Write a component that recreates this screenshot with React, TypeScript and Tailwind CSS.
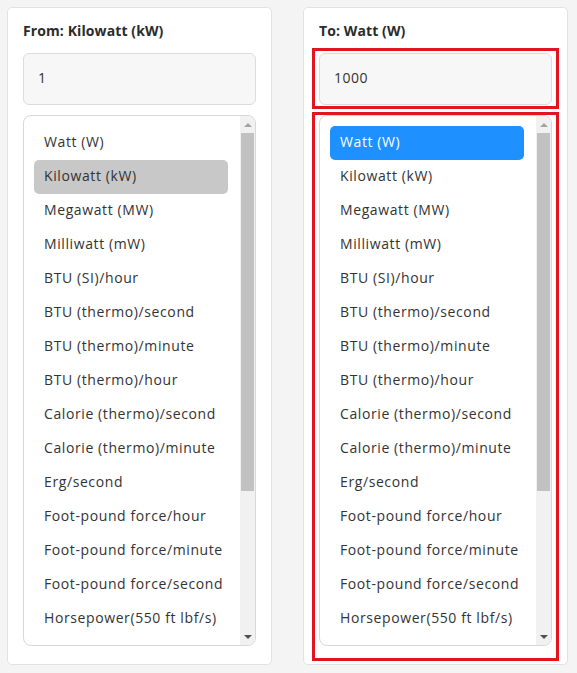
import React from "react";

const units = [
  "Watt (W)",
  "Kilowatt (kW)",
  "Megawatt (MW)",
  "Milliwatt (mW)",
  "BTU (SI)/hour",
  "BTU (thermo)/second",
  "BTU (thermo)/minute",
  "BTU (thermo)/hour",
  "Calorie (thermo)/second",
  "Calorie (thermo)/minute",
  "Erg/second",
  "Foot-pound force/hour",
  "Foot-pound force/minute",
  "Foot-pound force/second",
  "Horsepower(550 ft lbf/s)",
  "Horsepower (metric)",
];

const font = { fontFamily: '"Open Sans", "Noto Sans", sans-serif' };

interface PanelProps {
  label: string;
  value: string;
  selected: number;
  active?: boolean;
  marked?: boolean;
}

const Scrollbar: React.FC = () => (
  <div className="w-[15px] shrink-0 bg-[#f1f1f1] flex flex-col items-center">
    <div className="h-[17px] flex items-center justify-center">
      <div className="w-0 h-0 border-l-[4px] border-r-[4px] border-b-[4px] border-l-transparent border-r-transparent border-b-[#a3a3a3]" />
    </div>
    <div className="w-[13px] h-[358px] bg-[#c1c1c1]" />
    <div className="flex-1" />
    <div className="h-[17px] flex items-center justify-center">
      <div className="w-0 h-0 border-l-[4px] border-r-[4px] border-t-[4px] border-l-transparent border-r-transparent border-t-[#505050]" />
    </div>
  </div>
);

const Panel: React.FC<PanelProps> = ({ label, value, selected, active, marked }) => {
  return (
    <div className="w-[265px] h-[658px] shrink-0 bg-white border border-[#e2e2e2] rounded-[5px] px-[15px] pt-[12px]">
      <div className="h-[22px] leading-[22px] text-[14px] font-bold text-[#2b2b2b] tracking-[0.1px]">{label}</div>
      <div className="relative mt-[11px]">
        <div className="h-[52px] bg-[#f7f7f7] border border-[#dcdcdc] rounded-[6px] flex items-center px-[14px] pb-[3px] text-[14px] text-[#333] tracking-[0.5px]">
          {value}
        </div>
        {marked && (
          <div className="absolute -left-[7px] -right-[7px] -top-[5px] -bottom-[4px] border-[3px] border-[#e3141f] pointer-events-none" />
        )}
      </div>
      <div className="relative mt-[10px]">
        <div className="h-[531px] border border-[#d8d8d8] rounded-[8px] overflow-hidden flex">
          <div className="flex-1 overflow-hidden pt-[10px] pl-[10px] pr-[12px]">
            {units.map((u, i) => (
              <div
                key={u}
                className={
                  "h-[34px] shrink-0 flex items-center px-[10px] pb-[3px] rounded-[5px] text-[14px] tracking-[0.6px] whitespace-nowrap " +
                  (i === selected
                    ? active
                      ? "bg-[#1e90ff] text-white"
                      : "bg-[#c8c8c8] text-[#333]"
                    : "text-[#333]")
                }
              >
                {u}
              </div>
            ))}
          </div>
          <Scrollbar />
        </div>
        {marked && (
          <div className="absolute -left-[7px] -right-[7px] -top-[3px] -bottom-[15px] border-[3px] border-[#e3141f] pointer-events-none" />
        )}
      </div>
    </div>
  );
};

export default function App() {
  return (
    <div className="w-[577px] h-[673px] bg-[#f4f4f4] pt-[7px] pl-[7px] flex gap-[31px] overflow-hidden" style={font}>
      <Panel label="From: Kilowatt (kW)" value="1" selected={1} />
      <Panel label="To: Watt (W)" value="1000" selected={0} active marked />
    </div>
  );
}
